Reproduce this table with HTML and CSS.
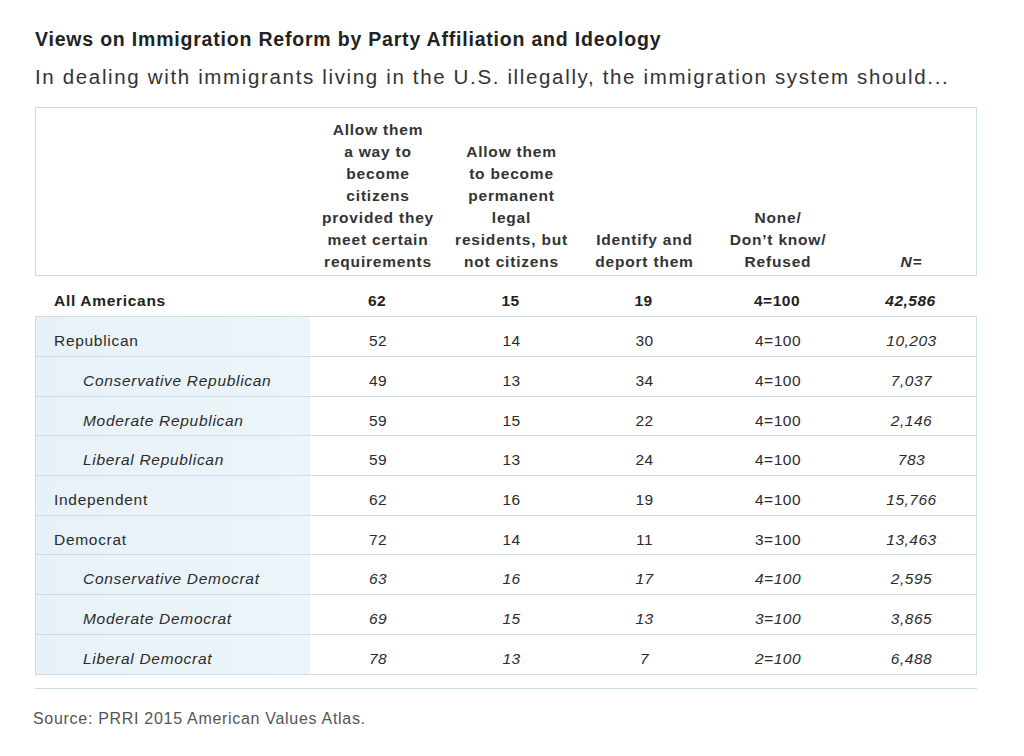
FILE: index.html
```html
<!DOCTYPE html>
<html lang="en">
<head>
<meta charset="utf-8">
<title>Views on Immigration Reform by Party Affiliation and Ideology</title>
<link rel="stylesheet" href="styles.css">
</head>
<body>
<main class="page">
  <h1 class="title">Views on Immigration Reform by Party Affiliation and Ideology</h1>
  <p class="subtitle">In dealing with immigrants living in the U.S. illegally, the immigration system should...</p>

  <div class="head-box grid">
    <div class="hcell"></div>
    <div class="hcell">Allow them<br>a way to<br>become<br>citizens<br>provided they<br>meet certain<br>requirements</div>
    <div class="hcell">Allow them<br>to become<br>permanent<br>legal<br>residents, but<br>not citizens</div>
    <div class="hcell">Identify and<br>deport them</div>
    <div class="hcell">None/<br>Don’t know/<br>Refused</div>
    <div class="hcell nhead">N=</div>
  </div>

  <div class="total grid">
    <div class="label">All Americans</div>
    <div class="num">62</div>
    <div class="num">15</div>
    <div class="num">19</div>
    <div class="num">4=100</div>
    <div class="num n">42,586</div>
  </div>

  <div class="body-box">
    <div class="row grid">
      <div class="label">Republican</div>
      <div class="num">52</div><div class="num">14</div><div class="num">30</div><div class="num">4=100</div><div class="num n">10,203</div>
    </div>
    <div class="row grid">
      <div class="label sub">Conservative Republican</div>
      <div class="num">49</div><div class="num">13</div><div class="num">34</div><div class="num">4=100</div><div class="num n">7,037</div>
    </div>
    <div class="row grid">
      <div class="label sub">Moderate Republican</div>
      <div class="num">59</div><div class="num">15</div><div class="num">22</div><div class="num">4=100</div><div class="num n">2,146</div>
    </div>
    <div class="row grid">
      <div class="label sub">Liberal Republican</div>
      <div class="num">59</div><div class="num">13</div><div class="num">24</div><div class="num">4=100</div><div class="num n">783</div>
    </div>
    <div class="row grid">
      <div class="label">Independent</div>
      <div class="num">62</div><div class="num">16</div><div class="num">19</div><div class="num">4=100</div><div class="num n">15,766</div>
    </div>
    <div class="row grid">
      <div class="label">Democrat</div>
      <div class="num">72</div><div class="num">14</div><div class="num">11</div><div class="num">3=100</div><div class="num n">13,463</div>
    </div>
    <div class="row grid italic-row">
      <div class="label sub">Conservative Democrat</div>
      <div class="num">63</div><div class="num">16</div><div class="num">17</div><div class="num">4=100</div><div class="num n">2,595</div>
    </div>
    <div class="row grid italic-row">
      <div class="label sub">Moderate Democrat</div>
      <div class="num">69</div><div class="num">15</div><div class="num">13</div><div class="num">3=100</div><div class="num n">3,865</div>
    </div>
    <div class="row grid italic-row">
      <div class="label sub">Liberal Democrat</div>
      <div class="num">78</div><div class="num">13</div><div class="num">7</div><div class="num">2=100</div><div class="num n">6,488</div>
    </div>
  </div>

  <div class="rule"></div>
  <p class="source">Source: PRRI 2015 American Values Atlas.</p>
</main>
</body>
</html>
```

FILE: styles.css
```css
* { box-sizing: border-box; }

html, body {
  margin: 0;
  padding: 0;
  background: #ffffff;
}

body {
  font-family: "Liberation Sans", Arial, sans-serif;
  color: #2b2b2b;
  width: 1024px;
  height: 756px;
  overflow: hidden;
}

.page {
  padding: 27px 0 0 35px;
  width: 977px;
}

.title {
  margin: 0;
  font-size: 19.5px;
  line-height: 24px;
  font-weight: bold;
  letter-spacing: 0.8px;
  color: #222;
}

.subtitle {
  margin: 14px 0 0 0;
  font-size: 20.5px;
  line-height: 24px;
  letter-spacing: 1.65px;
  color: #333;
}

.grid {
  display: grid;
  grid-template-columns: 275px 134px 133px 133px 134px 133px;
}

.head-box {
  margin-top: 18px;
  height: 169px;
  border: 1px solid #cddde5;
  align-items: end;
  padding-bottom: 2px;
}

.hcell {
  text-align: center;
  font-size: 15.5px;
  line-height: 22px;
  font-weight: bold;
  letter-spacing: 0.8px;
  color: #333;
}

.nhead {
  font-style: italic;
}

.total {
  height: 40px;
  align-items: center;
  font-weight: bold;
  padding-top: 9px;
}

.total .label {
  padding-left: 19px;
}

.body-box {
  border: 1px solid #cddde5;
  background: linear-gradient(to right, #e7f1f7 0, #ecf5f9 274px, #ffffff 274px);
}

.row {
  height: 39.7px;
  align-items: center;
  border-top: 1px solid #cddde5;
  padding-top: 9px;
}

.row:first-child {
  border-top: none;
  height: 39px;
}

.label {
  font-size: 15.5px;
  padding-left: 18px;
  letter-spacing: 0.7px;
  color: #2b2b2b;
}

.label.sub {
  padding-left: 47px;
  font-style: italic;
}

.num {
  text-align: center;
  font-size: 15.5px;
  letter-spacing: 0.5px;
  color: #2b2b2b;
}

.total .label,
.total .num {
  font-size: 15.5px;
  color: #222;
}

.n {
  font-style: italic;
}

.italic-row .num {
  font-style: italic;
}

.rule {
  margin-top: 13px;
  height: 1px;
  background: #cddde5;
}

.source {
  margin: 20px 0 0 -2px;
  font-size: 16px;
  line-height: 20px;
  letter-spacing: 0.7px;
  color: #555;
}
```
